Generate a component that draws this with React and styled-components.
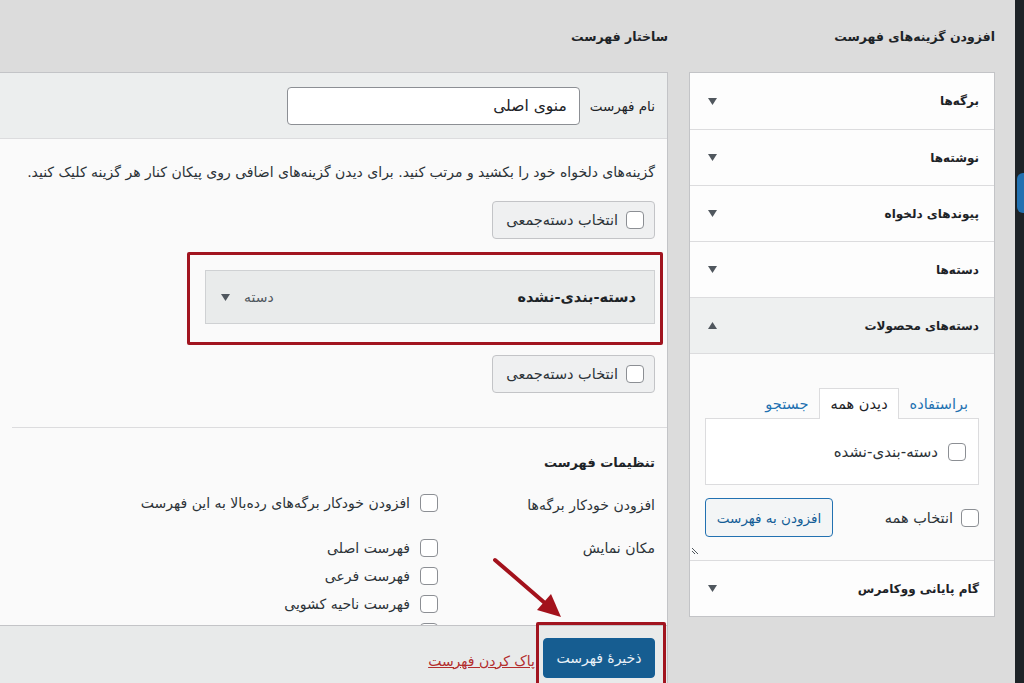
import React from 'react';
import styled, { createGlobalStyle } from 'styled-components';

const GlobalStyle = createGlobalStyle`
  html, body {
    margin: 0;
    padding: 0;
    background: #dcdcdc;
  }
  body {
    font-family: "DejaVu Sans", "Noto Sans", sans-serif;
    color: #1d2327;
  }
  * { box-sizing: border-box; }
`;

const Page = styled.div`
  position: relative;
  display: flex;
  direction: rtl;
  width: 1024px;
  height: 683px;
  overflow: hidden;
  background: #dcdcdc;
`;

const EdgeStrip = styled.div`
  position: relative;
  flex: 0 0 9px;
  background: #1d2327;

  &::before {
    content: '';
    position: absolute;
    top: 173px;
    right: 0;
    width: 7px;
    height: 40px;
    border-radius: 6px 0 0 6px;
    background: #2271b1;
  }
`;

const SideColumn = styled.div`
  flex: 0 0 306px;
  margin-right: 20px;
  margin-left: 21px;
`;

const MainColumn = styled.div`
  flex: 0 0 668px;
  display: flex;
  flex-direction: column;
`;

const ColumnTitle = styled.h2`
  margin: 0;
  flex: 0 0 72px;
  height: 72px;
  display: flex;
  align-items: center;
  font-size: 12.5px;
  font-weight: bold;
  color: #1d2327;
`;

const Accordion = styled.div`
  background: #fdfdfd;
  border: 1px solid #c3c4c7;
`;

const SectionHead = styled.div`
  height: 56px;
  display: flex;
  align-items: center;
  justify-content: space-between;
  padding: 0 15px 0 18px;
  font-size: 12px;
  font-weight: bold;
  background: ${p => (p.$open ? '#eef0f0' : '#fdfdfd')};
  border-top: ${p => (p.$first ? 'none' : '1px solid #dcdcde')};
`;

const SectionBody = styled.div`
  position: relative;
  height: 207px;
  padding: 33px 15px 0;
  border-top: 1px solid #dcdcde;
  background: #fbfbfb;
`;

const Tabs = styled.div`
  display: flex;
  align-items: flex-end;
  height: 31px;
`;

const Tab = styled.div`
  height: 31px;
  display: flex;
  align-items: center;
  padding: 0 10px;
  font-size: 14.5px;
  color: ${p => (p.$active ? '#1d2327' : '#2271b1')};
  background: ${p => (p.$active ? '#fff' : 'transparent')};
  border: 1px solid ${p => (p.$active ? '#dcdcde' : 'transparent')};
  border-bottom: none;
  margin-bottom: -1px;
  position: relative;
  z-index: 1;
`;

const TabPanel = styled.div`
  height: 67px;
  display: flex;
  align-items: center;
  padding: 0 12px;
  background: #fff;
  border: 1px solid #dcdcde;
`;

const CheckRow = styled.label`
  display: flex;
  align-items: center;
  gap: ${p => p.$gap || 10}px;
  font-size: ${p => p.$fs || 14}px;
  white-space: nowrap;
  color: #2c3338;
  height: ${p => p.$h || 'auto'};
`;

const Box = styled.input.attrs({ type: 'checkbox' })`
  appearance: none;
  margin: 0;
  flex: 0 0 auto;
  width: 18px;
  height: 18px;
  border: 1.5px solid #8c8f94;
  border-radius: 4px;
  background: #fff;
`;

const SideActions = styled.div`
  display: flex;
  align-items: center;
  justify-content: space-between;
  margin-top: 13px;
`;

const OutlineButton = styled.button`
  height: 39px;
  width: 128px;
  padding: 0;
  font-family: inherit;
  font-size: 13.5px;
  color: #135e96;
  background: #f3f5f6;
  border: 1.5px solid #2271b1;
  border-radius: 4px;
`;

const ResizeGrip = styled.svg`
  position: absolute;
  left: 1px;
  bottom: 5px;
`;

const Panel = styled.div`
  flex: 0 0 auto;
  display: flex;
  flex-direction: column;
  border: 1px solid #c3c4c7;
  border-left: none;
  background: #fafafa;
`;

const PanelHeader = styled.div`
  height: 66px;
  display: flex;
  align-items: center;
  gap: 10px;
  padding: 0 12px;
  background: #eceeee;
  border-bottom: 1px solid #dcdcde;
  font-size: 13.5px;
`;

const NameInput = styled.input`
  width: 293px;
  height: 38px;
  padding: 0 12px;
  font-family: inherit;
  font-size: 15.5px;
  color: #1d2327;
  direction: rtl;
  background: #fff;
  border: 1px solid #8c8f94;
  border-radius: 4px;
`;

const PanelBody = styled.div`
  height: 486px;
  overflow: hidden;
  padding: 23px 12px 0;
`;

const Hint = styled.p`
  margin: 0;
  font-size: 14px;
  line-height: 20px;
  white-space: nowrap;
  color: #2c3338;
`;

const BulkButton = styled.div`
  display: flex;
  align-items: center;
  gap: 8px;
  height: 38px;
  width: 163px;
  padding: 0 10px;
  margin-top: ${p => p.$mt}px;
  font-size: 14.5px;
  white-space: nowrap;
  color: #2c3338;
  background: #eff0f1;
  border: 1px solid #c3c4c7;
  border-radius: 4px;
`;

const MenuItem = styled.div`
  position: relative;
  width: 450px;
  height: 54px;
  margin-top: 31px;
  display: flex;
  align-items: center;
  justify-content: space-between;
  padding: 0 18px 0 15px;
  background: #e9ebeb;
  border: 1px solid #cfd1d3;

  &::after {
    content: '';
    position: absolute;
    top: -19px;
    bottom: -22px;
    right: -9px;
    left: -19px;
    border: 3px solid #a1141f;
    border-radius: 2px;
  }
`;

const ItemTitle = styled.span`
  font-size: 14.5px;
  font-weight: bold;
`;

const ItemMeta = styled.span`
  display: flex;
  align-items: center;
  gap: 14px;
  font-size: 14px;
  color: #50575e;
`;

const Divider = styled.hr`
  margin: 34px -12px 0 0;
  border: none;
  border-top: 1px solid #dcdcde;
`;

const SettingsTitle = styled.h3`
  margin: 24px 0 0;
  height: 20px;
  display: flex;
  align-items: center;
  font-size: 13px;
  font-weight: bold;
`;

const SettingRow = styled.div`
  display: flex;
  align-items: flex-start;
  margin-top: ${p => p.$mt}px;
`;

const SettingLabel = styled.div`
  flex: 0 0 217px;
  font-size: 14px;
  line-height: 22px;
  color: #2c3338;
`;

const SettingOptions = styled.div`
  display: flex;
  flex-direction: column;
  gap: 6px;
`;

const PanelFooter = styled.div`
  height: 60px;
  display: flex;
  align-items: flex-start;
  gap: 8px;
  padding: 12px 12px 0;
  background: #e8eaea;
  border-top: 1px solid #c3c4c7;
`;

const SaveButton = styled.button`
  position: relative;
  flex: 0 0 112px;
  height: 40px;
  font-family: inherit;
  font-size: 14px;
  color: #e9f1f7;
  background: #165d91;
  border: 1px solid #135e96;
  border-radius: 4px;

  &::after {
    content: '';
    position: absolute;
    top: -17px;
    bottom: -12px;
    right: -12px;
    left: -8px;
    border: 3px solid #a1141f;
    border-radius: 2px;
  }
`;

const DeleteLink = styled.a`
  margin-top: 15px;
  font-size: 14px;
  white-space: nowrap;
  color: #b32d2e;
  text-decoration: underline;
`;

const Pointer = styled.svg`
  position: absolute;
  left: 480px;
  top: 540px;
`;

const Caret = ({ up }) => (
  <svg width="9" height="7" viewBox="0 0 9 7">
    <polygon points={up ? '0,7 9,7 4.5,0' : '0,0 9,0 4.5,7'} fill="#50575e" />
  </svg>
);

const sections = ['برگه‌ها', 'نوشته‌ها', 'پیوندهای دلخواه', 'دسته‌ها'];
const locations = ['فهرست اصلی', 'فهرست فرعی', 'فهرست ناحیه کشویی', ''];

export default function App() {
  return (
    <>
      <GlobalStyle />
      <Page>
        <EdgeStrip />

        <SideColumn>
          <ColumnTitle>افزودن گزینه‌های فهرست</ColumnTitle>
          <Accordion>
            {sections.map((s, i) => (
              <SectionHead key={s} $first={i === 0}>
                {s}
                <Caret />
              </SectionHead>
            ))}
            <SectionHead $open>
              دسته‌های محصولات
              <Caret up />
            </SectionHead>
            <SectionBody>
              <Tabs>
                <Tab>براستفاده</Tab>
                <Tab $active>دیدن همه</Tab>
                <Tab>جستجو</Tab>
              </Tabs>
              <TabPanel>
                <CheckRow $fs={15}>
                  <Box />
                  دسته-بندی-نشده
                </CheckRow>
              </TabPanel>
              <SideActions>
                <CheckRow $gap={8} $fs={14.5}>
                  <Box />
                  انتخاب همه
                </CheckRow>
                <OutlineButton>افزودن به فهرست</OutlineButton>
              </SideActions>
              <ResizeGrip width="10" height="10" viewBox="0 0 10 10">
                <line x1="1" y1="3" x2="7" y2="9" stroke="#50575e" strokeWidth="1" />
                <line x1="1" y1="6" x2="4" y2="9" stroke="#50575e" strokeWidth="1" />
              </ResizeGrip>
            </SectionBody>
            <SectionHead>
              گام پایانی ووکامرس
              <Caret />
            </SectionHead>
          </Accordion>
        </SideColumn>

        <MainColumn>
          <ColumnTitle>ساختار فهرست</ColumnTitle>
          <Panel>
            <PanelHeader>
              نام فهرست
              <NameInput defaultValue="منوی اصلی" />
            </PanelHeader>
            <PanelBody>
              <Hint>
                گزینه‌های دلخواه خود را بکشید و مرتب کنید. برای دیدن گزینه‌های اضافی روی پیکان کنار هر گزینه کلیک کنید.
              </Hint>
              <BulkButton $mt={19}>
                <Box />
                انتخاب دسته‌جمعی
              </BulkButton>
              <MenuItem>
                <ItemTitle>دسته-بندی-نشده</ItemTitle>
                <ItemMeta>
                  دسته
                  <Caret />
                </ItemMeta>
              </MenuItem>
              <BulkButton $mt={31}>
                <Box />
                انتخاب دسته‌جمعی
              </BulkButton>
              <Divider />
              <SettingsTitle>تنظیمات فهرست</SettingsTitle>
              <SettingRow $mt={22}>
                <SettingLabel>افزودن خودکار برگه‌ها</SettingLabel>
                <SettingOptions>
                  <CheckRow>
                    <Box />
                    افزودن خودکار برگه‌های رده‌بالا به این فهرست
                  </CheckRow>
                </SettingOptions>
              </SettingRow>
              <SettingRow $mt={21}>
                <SettingLabel>مکان نمایش</SettingLabel>
                <SettingOptions>
                  {locations.map((l, i) => (
                    <CheckRow key={i} $h="22px">
                      <Box />
                      {l}
                    </CheckRow>
                  ))}
                </SettingOptions>
              </SettingRow>
            </PanelBody>
            <PanelFooter>
              <SaveButton>ذخیرهٔ فهرست</SaveButton>
              <DeleteLink>پاک کردن فهرست</DeleteLink>
            </PanelFooter>
          </Panel>
        </MainColumn>

        <Pointer width="100" height="90" viewBox="0 0 100 90">
          <line x1="15" y1="20" x2="66" y2="64" stroke="#a3121c" strokeWidth="4" strokeLinecap="round" />
          <polygon points="81,77 57,70 71,54" fill="#a3121c" />
        </Pointer>
      </Page>
    </>
  );
}
